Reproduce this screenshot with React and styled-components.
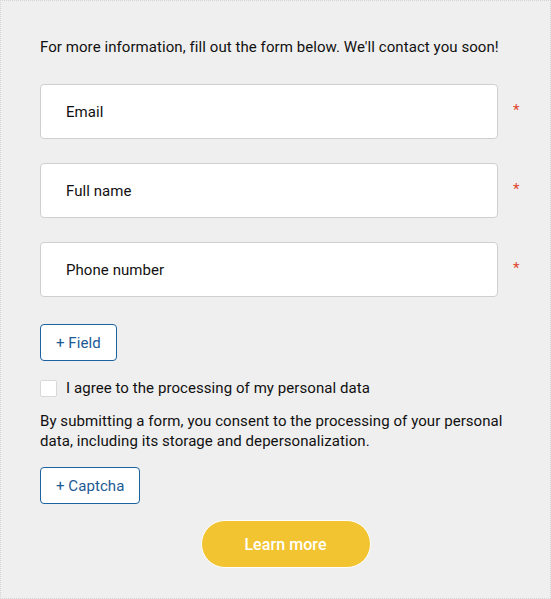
import React from 'react'
import styled, { createGlobalStyle } from 'styled-components'

const Global = createGlobalStyle`
  body {
    margin: 0;
    font-family: Roboto, "Liberation Sans", sans-serif;
    letter-spacing: 0.07px;
  }
`

const Page = styled.div`
  width: 551px;
  height: 599px;
  box-sizing: border-box;
  border: 1px dotted #d4d4d4;
  background: #efefef;
  padding: 36px 0 0 39px;
  color: #111;
`

const Intro = styled.div`
  font-size: 15px;
  line-height: 20px;
  margin-bottom: 27px;
`

const Row = styled.div`
  display: flex;
  align-items: center;
  margin-bottom: 24px;
`

const Input = styled.div`
  width: 458px;
  height: 55px;
  box-sizing: border-box;
  background: #fff;
  border: 1px solid #cfcfcf;
  border-radius: 4px;
  display: flex;
  align-items: center;
  padding-left: 25px;
  font-size: 15px;
`

const Required = styled.span`
  color: #e0462f;
  font-size: 15px;
  margin-left: 15px;
  margin-top: -4px;
`

const OutlineButton = styled.button`
  display: block;
  height: 37px;
  box-sizing: border-box;
  padding: 0 15px;
  margin-top: ${p => p.$top || 0}px;
  border: 1px solid #1c62a0;
  border-radius: 4px;
  background: #fff;
  color: #1c5a94;
  font-family: inherit;
  letter-spacing: inherit;
  font-size: 15px;
  cursor: pointer;
`

const Check = styled.label`
  display: flex;
  align-items: center;
  gap: 9px;
  font-size: 15px;
  margin-top: 18px;
`

const Box = styled.span`
  width: 17px;
  height: 17px;
  box-sizing: border-box;
  background: #fff;
  border: 1px solid #d8d8d8;
  border-radius: 2px;
`

const Note = styled.p`
  margin: 14px 0 16px;
  width: 490px;
  font-size: 15px;
  line-height: 20px;
`

const Footer = styled.div`
  display: flex;
  justify-content: center;
  width: 491px;
  margin-top: 16px;
`

const Submit = styled.button`
  width: 170px;
  height: 48px;
  border-radius: 24px;
  border: 1px solid #fff;
  background: #f2c432;
  color: #fff;
  font-family: inherit;
  letter-spacing: inherit;
  font-size: 16px;
  font-weight: 500;
  cursor: pointer;
`

const fields = ['Email', 'Full name', 'Phone number']

export default function App () {
  return (
    <>
      <Global />
      <Page>
        <Intro>For more information, fill out the form below. We'll contact you soon!</Intro>
        {fields.map(f => (
          <Row key={f}>
            <Input>{f}</Input>
            <Required>*</Required>
          </Row>
        ))}
        <OutlineButton $top={27}>+ Field</OutlineButton>
        <Check>
          <Box />
          I agree to the processing of my personal data
        </Check>
        <Note>
          By submitting a form, you consent to the processing of your personal data, including its storage and depersonalization.
        </Note>
        <OutlineButton>+ Captcha</OutlineButton>
        <Footer>
          <Submit>Learn more</Submit>
        </Footer>
      </Page>
    </>
  )
}
